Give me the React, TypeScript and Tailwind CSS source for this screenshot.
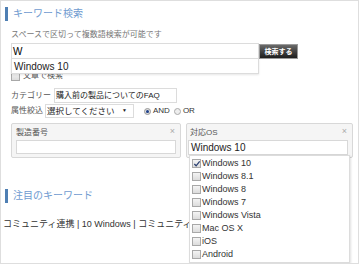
import React from 'react';

const font = { fontFamily: '"Liberation Sans", "Noto Sans CJK JP", sans-serif' };

const osList = ['Windows 10', 'Windows 8.1', 'Windows 8', 'Windows 7', 'Windows Vista', 'Mac OS X', 'iOS', 'Android'];

function Box({ checked }: { checked?: boolean }) {
  return (
    <span className="relative inline-block w-[9px] h-[9px] border border-[#a8a8a8] bg-gradient-to-b from-[#f4f4f4] to-[#dcdcdc] shrink-0">
      {checked ? (
        <svg viewBox="0 0 9 9" className="absolute inset-0 w-[8px] h-[8px]">
          <path d="M1.5 4.5 L3.5 6.5 L7.5 1.5" fill="none" stroke="#2a3f70" strokeWidth="1.4" />
        </svg>
      ) : null}
    </span>
  );
}

function Heading({ title }: { title: string }) {
  return (
    <div className="flex items-center h-[14px] pl-[4px]">
      <span className="w-[3px] h-[14px] bg-[#4f7fb3]" />
      <span className="ml-[5px] text-[10px] text-[#6f9bd0] leading-none">{title}</span>
    </div>
  );
}

export default function App() {
  return (
    <div className="w-[359px] h-[264px] border border-[#dedede] bg-white relative overflow-hidden" style={font}>
      <div className="pt-[6px]">
        <Heading title="キーワード検索" />
      </div>

      <div className="ml-[10px] mt-[10px] text-[8px] text-[#777] leading-none">スペースで区切って複数語検索が可能です</div>

      <div className="relative ml-[10px] mt-[4px]">
        <div className="flex items-center">
          <div className="w-[248px] h-[16px] border border-[#dcdcdc] flex items-center pl-[1px] text-[10px] text-black">W</div>
          <button className="w-[39px] h-[15px] border border-[#9a9a9a] bg-gradient-to-b from-[#6a6a6a] to-[#1e1e1e] text-white text-[7px] font-bold leading-none">
            検索する
          </button>
        </div>
        <div className="flex items-center gap-[3px] mt-[12px] h-[10px] text-[8px] text-[#555]">
          <Box />
          <span>文章で検索</span>
        </div>
        <div className="absolute left-0 top-[15px] w-[248px] h-[16px] bg-white border border-[#dcdcdc] shadow-[0_1px_2px_rgba(0,0,0,0.1)] flex items-center pl-[2px] text-[10px] text-[#222]">
          Windows 10
        </div>
      </div>

      <div className="ml-[10px] mt-[7px] flex items-center text-[8px] text-[#555]">
        <span className="w-[43px]">カテゴリー</span>
        <div className="w-[123px] h-[15px] border border-[#dcdcdc] flex items-center pl-[1px] text-[#222]">購入前の製品についてのFAQ</div>
      </div>

      <div className="ml-[10px] mt-[1px] flex items-center text-[8px] text-[#555]">
        <span className="w-[34px]">属性絞込</span>
        <div className="w-[89px] h-[14px] border border-[#dcdcdc] flex items-center pl-[1px] pr-[6px] justify-between text-[8.5px] text-[#222]">
          <span>選択してください</span>
          <span className="text-[5px]">▼</span>
        </div>
        <div className="ml-[10px] flex items-center gap-[2px] text-[8px] text-[#333]">
          <span className="w-[7px] h-[7px] rounded-full border border-[#999] bg-[#ddd] flex items-center justify-center">
            <span className="w-[3px] h-[3px] rounded-full bg-[#1d3f8a]" />
          </span>
          <span>AND</span>
          <span className="ml-[2px] w-[7px] h-[7px] rounded-full border border-[#aaa] bg-[#eee]" />
          <span>OR</span>
        </div>
      </div>

      <div className="relative ml-[10px] mt-[5px] flex gap-[5px]">
        <div className="w-[170px] h-[35px] border border-[#d8d8d8] bg-[#f5f5f5] rounded-[2px] px-[4px] pt-[2px] relative">
          <div className="text-[8px] text-[#555] leading-[14px]">製造番号</div>
          <div className="h-[14px] border border-[#d8d8d8] bg-white" />
          <span className="absolute right-[5px] top-[1px] text-[9px] text-[#aaa]">×</span>
        </div>
        <div className="w-[167px] h-[35px] border border-[#d8d8d8] bg-[#f5f5f5] rounded-[2px] pl-[1px] pr-[4px] pt-[2px] relative">
          <div className="text-[8px] text-[#555] leading-[14px] pl-[2px]">対応OS</div>
          <div className="h-[15px] border border-[#d8d8d8] bg-white flex items-center pl-[2px] text-[10px] text-[#222]">Windows 10</div>
          <span className="absolute right-[5px] top-[1px] text-[9px] text-[#aaa]">×</span>
        </div>
        <div className="absolute left-[178px] top-[32px] w-[161px] bg-white border border-[#dcdcdc] shadow-[1px_1px_2px_rgba(0,0,0,0.12)] pl-[2px] pt-[1px] pb-[1px] z-10">
          {osList.map((os, i) => (
            <div key={os} className="flex items-center gap-[1px] h-[13px] text-[9px] text-[#333]">
              <Box checked={i === 0} />
              <span>{os}</span>
            </div>
          ))}
        </div>
      </div>

      <div className="mt-[31px]">
        <Heading title="注目のキーワード" />
      </div>

      <div className="mt-[15px] pl-[2px] text-[9px] text-[#333] whitespace-nowrap">
        コミュニティ連携 | 10 Windows | コミュニティ連携
      </div>
    </div>
  );
}
